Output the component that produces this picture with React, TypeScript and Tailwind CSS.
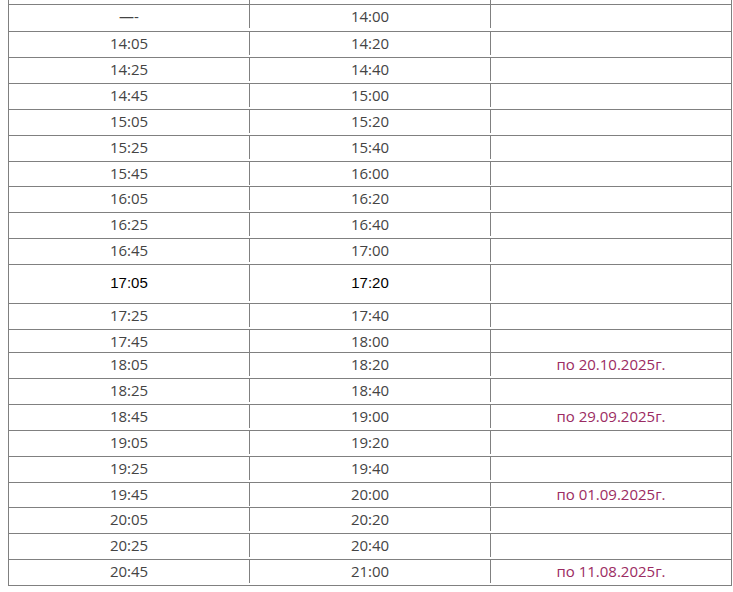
type Row = { dep: string; arr: string; note?: string; h: string; plain?: boolean };

const rows: Row[] = [
  { dep: '—-', arr: '14:00', h: 'h-[27px]' },
  { dep: '14:05', arr: '14:20', h: 'h-[26px]' },
  { dep: '14:25', arr: '14:40', h: 'h-[26px]' },
  { dep: '14:45', arr: '15:00', h: 'h-[26px]' },
  { dep: '15:05', arr: '15:20', h: 'h-[26px]' },
  { dep: '15:25', arr: '15:40', h: 'h-[26px]' },
  { dep: '15:45', arr: '16:00', h: 'h-[25px]' },
  { dep: '16:05', arr: '16:20', h: 'h-[26px]' },
  { dep: '16:25', arr: '16:40', h: 'h-[26px]' },
  { dep: '16:45', arr: '17:00', h: 'h-[26px]' },
  { dep: '17:05', arr: '17:20', h: 'h-[39px]', plain: true },
  { dep: '17:25', arr: '17:40', h: 'h-[26px]' },
  { dep: '17:45', arr: '18:00', h: 'h-[23px]' },
  { dep: '18:05', arr: '18:20', note: 'по 20.10.2025г.', h: 'h-[26px]' },
  { dep: '18:25', arr: '18:40', h: 'h-[26px]' },
  { dep: '18:45', arr: '19:00', note: 'по 29.09.2025г.', h: 'h-[26px]' },
  { dep: '19:05', arr: '19:20', h: 'h-[26px]' },
  { dep: '19:25', arr: '19:40', h: 'h-[26px]' },
  { dep: '19:45', arr: '20:00', note: 'по 01.09.2025г.', h: 'h-[25px]' },
  { dep: '20:05', arr: '20:20', h: 'h-[26px]' },
  { dep: '20:25', arr: '20:40', h: 'h-[26px]' },
  { dep: '20:45', arr: '21:00', note: 'по 11.08.2025г.', h: 'h-[26px]' },
];

export default function App() {
  return (
    <div className="min-h-screen bg-white font-['Open_Sans',sans-serif] text-[15px] text-[#444444]">
      <div className="ml-[8px] w-[724px] border-x border-[#808080]">
        {/* tail of the previous row, cut off by the window */}
        <div className="grid h-[5px] grid-cols-[241px_241px_240px] border-b border-[#808080]">
          <div className="border-r border-[#808080]" />
          <div className="border-r border-[#808080]" />
          <div />
        </div>
        {rows.map((r) => (
          <div
            key={r.dep + r.arr}
            className={`grid grid-cols-[241px_241px_240px] border-b border-[#808080] ${r.h} ${
              r.plain ? "font-['Liberation_Sans',sans-serif] text-black pb-[2px]" : 'pb-[3px]'
            }`}
          >
            <div className="flex items-center justify-center border-r border-[#808080]">{r.dep}</div>
            <div className="flex items-center justify-center border-r border-[#808080]">{r.arr}</div>
            <div className="flex items-center justify-center text-[#9b2b62]">{r.note}</div>
          </div>
        ))}
      </div>
    </div>
  );
}
